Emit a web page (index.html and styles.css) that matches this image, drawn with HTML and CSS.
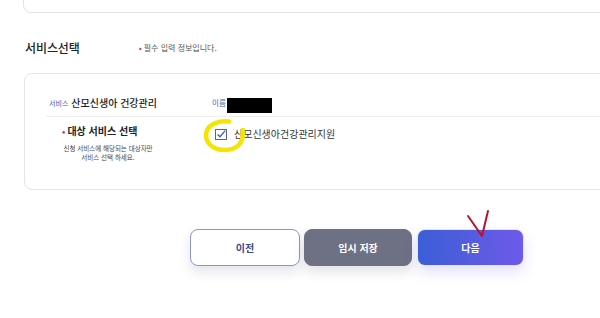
FILE: index.html
```html
<!DOCTYPE html>
<html lang="ko">
<head>
<meta charset="utf-8">
<link rel="stylesheet" href="styles.css">
</head>
<body>
<div class="page">
  <div class="prev-card"></div>

  <div class="section-head">
    <h2 class="section-title">서비스선택</h2>
    <p class="req-note"><span class="req-dot">•</span>필수 입력 정보입니다.</p>
  </div>

  <div class="card">
    <div class="row row-info">
      <div class="cell">
        <span class="tag">서비스</span><span class="info-value">산모신생아 건강관리</span>
      </div>
      <div class="cell">
        <span class="tag tag-name">이름</span><span class="redact"></span>
      </div>
    </div>
    <div class="row row-select">
      <div class="cell label-col">
        <div class="field-label"><span class="req-dot">•</span>대상 서비스 선택</div>
        <div class="field-help">신청 서비스에 해당되는 대상자만<br>서비스 선택 하세요.</div>
      </div>
      <div class="cell option-col">
        <label class="option">
          <span class="checkbox">
            <svg viewBox="0 0 12 11" width="12" height="11"><rect x="0.5" y="0.5" width="11" height="10" fill="#fff" stroke="#55629c" stroke-width="1"/><path d="M2.6 5.4 L5 7.8 L10.2 1.6" fill="none" stroke="#3d5fd6" stroke-width="1.4"/></svg>
            <svg class="mark-circle" viewBox="0 0 45 35" width="45" height="35"><path d="M26 3.5 C15 2 3 7 3 17 C3 27 12 32 22 32 C33 32 41 26 40 12" fill="none" stroke="#f5e400" stroke-width="4.5" stroke-linecap="round"/></svg>
          </span>
          <span class="option-text">산모신생아건강관리지원</span>
        </label>
      </div>
    </div>
  </div>

  <div class="actions">
    <button class="btn btn-prev">이전</button>
    <button class="btn btn-save">임시 저장</button>
    <button class="btn btn-next">다음
      <svg class="mark-v" viewBox="0 0 28 32" width="28" height="32"><path d="M4 8 L18 28 L24 3" fill="none" stroke="#b8122c" stroke-width="2" stroke-linejoin="round" stroke-linecap="round"/></svg>
    </button>
  </div>
</div>
</body>
</html>
```

FILE: styles.css
```css
* { box-sizing: border-box; }
html, body { margin: 0; padding: 0; background: #fff; }
body {
  width: 600px;
  height: 318px;
  overflow: hidden;
  font-family: "Noto Sans CJK KR", "Noto Sans", sans-serif;
  color: #222;
}
.page { padding-left: 24px; }

.prev-card {
  height: 13px;
  margin-right: -40px;
  margin-left: -1px;
  border: 1px solid #e4e4e4;
  border-top: none;
  border-radius: 0 0 8px 8px;
}

.section-head {
  display: flex;
  align-items: center;
  margin-top: 27px;
  height: 16px;
}
.section-title {
  margin: 0;
  width: 115px;
  padding-left: 1px;
  font-size: 12px;
  line-height: 16px;
  font-weight: 500;
  letter-spacing: -0.1px;
  color: #222;
}
.req-note {
  margin: 0;
  font-size: 8px;
  line-height: 10px;
  color: #555;
}
.req-dot {
  color: #d0304a;
  margin-right: 2px;
}

.card {
  margin-top: 17px;
  margin-right: -40px;
  height: 117px;
  border: 1px solid #e5e5e5;
  border-radius: 8px;
  padding: 0 0 0 21px;
}
.row {
  display: grid;
  grid-template-columns: 166px 1fr;
}
.row-info {
  padding: 18px 0 8px;
  border-bottom: 1px solid #eeeeee;
  height: 43px;
  align-items: center;
}
.cell { display: flex; align-items: center; }
.tag {
  font-size: 7px;
  line-height: 10px;
  color: #3a56b3;
  margin-left: 3px;
  margin-right: 3px;
}
.tag-name { margin-left: 0; margin-right: 1px; color: #5063a8; font-size: 7.5px; }
.info-value {
  font-size: 10px;
  line-height: 16px;
  font-weight: 500;
  color: #222;
}
.redact {
  display: inline-block;
  width: 45px;
  height: 15px;
  background: #000;
  margin-top: 6px;
}

.row-select { padding-top: 7px; align-items: start; }
.label-col { flex-direction: column; align-items: flex-start; }
.field-label {
  padding-left: 16px;
  font-size: 10px;
  line-height: 14px;
  font-weight: 700;
  color: #222;
}
.field-label .req-dot { margin-right: 2px; font-weight: 400; }
.field-help {
  width: 124px;
  margin-top: 6px;
  text-align: center;
  font-size: 6.5px;
  line-height: 8.5px;
  color: #444;
}
.option-col { padding-top: 3px; }
.option { display: flex; align-items: center; margin-left: 3px; }
.checkbox {
  position: relative;
  display: block;
  width: 12px;
  height: 11px;
}
.checkbox svg { display: block; }
.mark-circle {
  position: absolute;
  left: -12px;
  top: -11px;
}
.option-text {
  margin-left: 7px;
  font-size: 10px;
  line-height: 14px;
  color: #333;
}

.actions {
  display: flex;
  gap: 4px;
  margin-top: 39px;
  padding-left: 166px;
}
.btn {
  position: relative;
  width: 108px;
  height: 37px;
  border-radius: 8px;
  font-family: "Noto Sans CJK KR", "Noto Sans", sans-serif;
  font-size: 10px;
  font-weight: 700;
  padding: 0;
  cursor: pointer;
}
.btn-prev {
  width: 110px;
  background: #fff;
  border: 1px solid #8b96c6;
  color: #3b4a8c;
  box-shadow: 0 6px 12px rgba(60, 70, 110, 0.14);
}
.btn-save {
  background: #6e7084;
  border: 1px solid #6e7084;
  color: #fff;
  box-shadow: 0 6px 12px rgba(60, 60, 80, 0.14);
}
.btn-next {
  margin-left: 1px;
  width: 107px;
  background: linear-gradient(90deg, #3b5ed6 0%, #6e5ae9 100%);
  border: 1px solid #e6e3fb;
  color: #fff;
  box-shadow: 0 6px 14px rgba(100, 90, 220, 0.18);
}
.mark-v {
  position: absolute;
  left: 46px;
  top: -22px;
}
```
